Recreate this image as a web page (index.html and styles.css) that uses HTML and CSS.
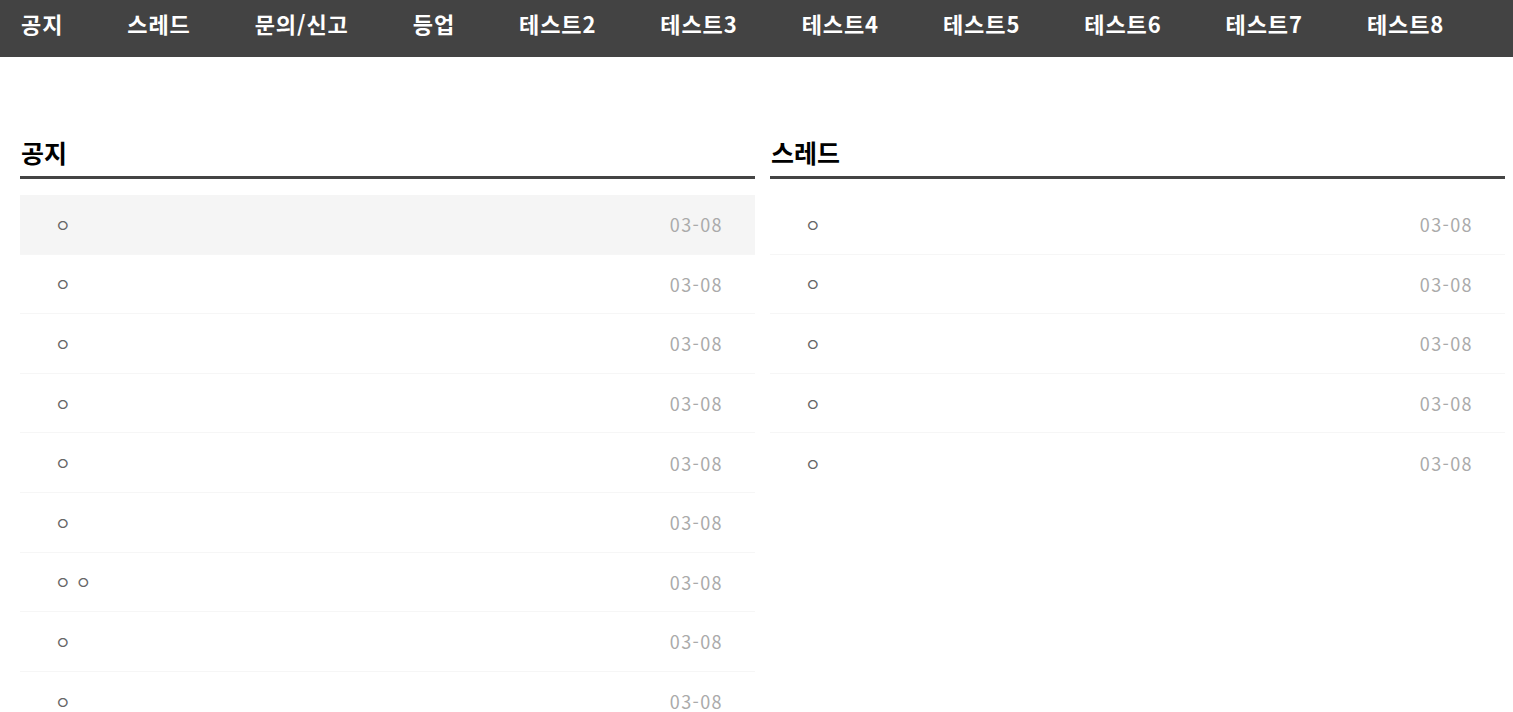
FILE: index.html
```html
<!DOCTYPE html>
<html lang="ko">
<head>
<meta charset="utf-8">
<title>게시판</title>
<link rel="stylesheet" href="styles.css">
</head>
<body>
<nav class="topnav">
  <a class="nav-item" href="#">공지</a>
  <a class="nav-item" href="#">스레드</a>
  <a class="nav-item" href="#">문의/신고</a>
  <a class="nav-item" href="#">등업</a>
  <a class="nav-item" href="#">테스트2</a>
  <a class="nav-item" href="#">테스트3</a>
  <a class="nav-item" href="#">테스트4</a>
  <a class="nav-item" href="#">테스트5</a>
  <a class="nav-item" href="#">테스트6</a>
  <a class="nav-item" href="#">테스트7</a>
  <a class="nav-item" href="#">테스트8</a>
</nav>
<main class="boards">
  <section class="board">
    <h2 class="board-title">공지</h2>
    <ul class="post-list">
      <li class="post hover"><span class="post-title">ㅇ</span><span class="post-date">03-08</span></li>
      <li class="post"><span class="post-title">ㅇ</span><span class="post-date">03-08</span></li>
      <li class="post"><span class="post-title">ㅇ</span><span class="post-date">03-08</span></li>
      <li class="post"><span class="post-title">ㅇ</span><span class="post-date">03-08</span></li>
      <li class="post"><span class="post-title">ㅇ</span><span class="post-date">03-08</span></li>
      <li class="post"><span class="post-title">ㅇ</span><span class="post-date">03-08</span></li>
      <li class="post"><span class="post-title">ㅇ ㅇ</span><span class="post-date">03-08</span></li>
      <li class="post"><span class="post-title">ㅇ</span><span class="post-date">03-08</span></li>
      <li class="post"><span class="post-title">ㅇ</span><span class="post-date">03-08</span></li>
      <li class="post"><span class="post-title">ㅇ</span><span class="post-date">03-08</span></li>
    </ul>
  </section>
  <section class="board">
    <h2 class="board-title">스레드</h2>
    <ul class="post-list">
      <li class="post"><span class="post-title">ㅇ</span><span class="post-date">03-08</span></li>
      <li class="post"><span class="post-title">ㅇ</span><span class="post-date">03-08</span></li>
      <li class="post"><span class="post-title">ㅇ</span><span class="post-date">03-08</span></li>
      <li class="post"><span class="post-title">ㅇ</span><span class="post-date">03-08</span></li>
      <li class="post"><span class="post-title">ㅇ</span><span class="post-date">03-08</span></li>
    </ul>
  </section>
</main>
</body>
</html>
```

FILE: styles.css
```css
* { box-sizing: border-box; }
html, body {
  margin: 0;
  padding: 0;
  background: #fff;
  font-family: "Noto Sans CJK KR", "Noto Sans", sans-serif;
}
.topnav {
  display: flex;
  align-items: center;
  gap: 64px;
  height: 57px;
  padding: 0 0 11px 21px;
  background: #434343;
}
.nav-item {
  color: #fff;
  text-decoration: none;
  font-size: 22px;
  font-weight: 700;
  line-height: 1;
  letter-spacing: 0.9px;
}
.boards {
  display: flex;
  gap: 15px;
  padding: 80px 8px 0 20px;
}
.board {
  flex: 1 1 0;
  min-width: 0;
}
.board-title {
  margin: 0;
  padding: 0 0 9px 1px;
  font-size: 25px;
  font-weight: 700;
  color: #000;
  line-height: 30px;
  border-bottom: 3px solid #444;
}
.post-list {
  list-style: none;
  margin: 16px 0 0;
  padding: 0;
}
.post {
  display: flex;
  justify-content: space-between;
  align-items: center;
  height: 59.6px;
  padding: 0 32px 0 35px;
  border-bottom: 1px solid #f6f6f6;
}
.post:last-child { border-bottom: none; }
.post.hover { background: #f5f5f5; }
.post-title {
  font-size: 17px;
  color: #666;
  white-space: pre;
}
.post-date {
  font-size: 18px;
  letter-spacing: 1.4px;
  color: #aaa;
}
```
